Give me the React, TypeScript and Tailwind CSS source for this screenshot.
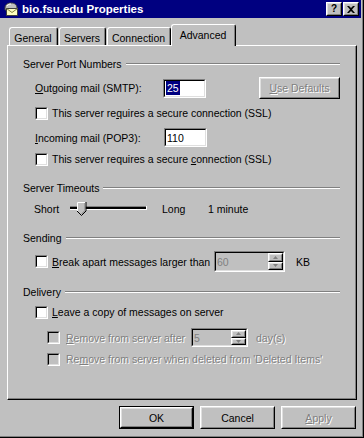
import type { ReactNode } from "react";

const sunken = "border border-t-[#808080] border-l-[#808080] border-r-white border-b-white";
const sunkenInner = "border border-t-black border-l-black border-r-[#dfdfdf] border-b-[#dfdfdf]";
const raised = "border border-t-white border-l-white border-r-black border-b-black";
const raisedInner = "border border-t-[#dfdfdf] border-l-[#dfdfdf] border-r-[#808080] border-b-[#808080]";
const grayed = "text-[#808080] [text-shadow:1px_1px_0_#fff]";

export default function App() {
  return (
    <div className="h-[438px] w-[364px] overflow-hidden border-r border-b border-r-black border-b-black bg-[#c0c0c0] font-['Liberation_Sans',Arial,sans-serif] text-[10.5px] leading-[14px] text-black">
      <div className="flex h-full flex-col border-r border-b border-r-[#808080] border-b-[#808080]">
        <TitleBar />
        <Tabs />
        <section className="ml-[7px] flex h-[355px] w-[350px] flex-col border border-t-white border-l-white border-r-black border-b-black">
          <div className="flex h-full flex-col border-r border-b border-r-[#808080] border-b-[#808080] pt-[11px] pr-[15px] pl-[15px]">
            <GroupHeader label="Server Port Numbers" />

            <div className="mt-[6px] flex h-[22px] items-center pl-[12px]">
              <span className="w-[129px]">
                <u>O</u>utgoing mail (SMTP):
              </span>
              <Field width="w-[43px]">
                <span className="bg-[#000080] px-[1px] text-white">25</span>
              </Field>
              <Button className="ml-[53px] w-[81px]" disabled>
                <u>U</u>se Defaults
              </Button>
            </div>

            <CheckRow className="mt-[7px]">
              This server re<u>q</u>uires a secure connection (SSL)
            </CheckRow>

            <div className="mt-[8px] flex h-[19px] items-center pl-[12px]">
              <span className="w-[129px]">
                <u>I</u>ncoming mail (POP3):
              </span>
              <Field width="w-[43px]">110</Field>
            </div>

            <CheckRow className="mt-[5px]">
              This server requires a secure <u>c</u>onnection (SSL)
            </CheckRow>

            <div className="mt-[15px]">
              <GroupHeader label="Server Timeouts" />
            </div>

            <div className="mt-[6px] flex h-[16px] items-center pl-[11px]">
              <span className="w-[36px]">Short</span>
              <Slider />
              <span className="ml-[14px] w-[46px]">Long</span>
              <span>1 minute</span>
            </div>

            <div className="mt-[14px]">
              <GroupHeader label="Sending" />
            </div>

            <div className="mt-[6px] flex h-[21px] items-center pl-[12px]">
              <Check />
              <span className="ml-[4px] w-[162px] whitespace-nowrap">
                <u>B</u>reak apart messages larger than
              </span>
              <SpinBox value="60" width="w-[71px]" />
              <span className="ml-[11px]">KB</span>
            </div>

            <div className="mt-[13px]">
              <GroupHeader label="Delivery" />
            </div>

            <CheckRow className="mt-[6px]">
              <u>L</u>eave a copy of messages on server
            </CheckRow>

            <div className="mt-[9px] flex h-[19px] items-center pl-[24px]">
              <Check disabled />
              <span className={`ml-[6px] w-[125px] whitespace-nowrap ${grayed}`}>
                <u>R</u>emove from server after
              </span>
              <SpinBox value="5" width="w-[57px]" />
              <span className={`ml-[8px] ${grayed}`}>day(s)</span>
            </div>

            <div className="mt-[5px] flex h-[14px] items-center pl-[24px]">
              <Check disabled />
              <span className={`ml-[6px] whitespace-nowrap ${grayed}`}>
                Re<u>m</u>ove from server when deleted from 'Deleted Items'
              </span>
            </div>
          </div>
        </section>

        <footer className="mt-[6px] flex gap-[6px] pl-[119px]">
          <div className="h-[23px] w-[75px] border border-black">
            <div className={`h-full w-full ${raised}`}>
              <div className={`flex h-full w-full items-center justify-center ${raisedInner}`}>OK</div>
            </div>
          </div>
          <Button className="h-[23px] w-[75px]">Cancel</Button>
          <Button className="h-[23px] w-[75px]" disabled>
            <u>A</u>pply
          </Button>
        </footer>
      </div>
    </div>
  );
}

function TitleBar() {
  return (
    <header className="mr-[1px] flex h-[18px] shrink-0 items-center bg-[#000080] pr-[2px] pl-[3px]">
      <MailIcon />
      <span className="ml-[3px] text-[11.5px] font-bold text-white">bio.fsu.edu Properties</span>
      <div className="ml-auto flex">
        <div className={`h-[14px] w-[16px] bg-[#c0c0c0] ${raised}`}>
          <div className={`flex h-full w-full items-center justify-center text-[10px] leading-[10px] font-bold ${raisedInner}`}>
            ?
          </div>
        </div>
        <div className={`ml-[1px] h-[14px] w-[16px] bg-[#c0c0c0] ${raised}`}>
          <div className={`flex h-full w-full items-center justify-center ${raisedInner}`}>
            <svg width="8" height="7" viewBox="0 0 8 7" aria-hidden>
              <path d="M0 0h2l2 2 2-2h2L5 3.5 8 7H6L4 5 2 7H0l3-3.5z" fill="#000" />
            </svg>
          </div>
        </div>
      </div>
    </header>
  );
}

function MailIcon() {
  return (
    <svg width="16" height="16" viewBox="0 0 16 16" aria-hidden>
      <path d="M2 7c0-3 2-5 6-5s6 2 6 5v2H2z" fill="#c0c0c0" stroke="#404040" strokeWidth="1" />
      <path d="M4 5c1-1.5 2.5-2 4-2" stroke="#fff" strokeWidth="1" fill="none" />
      <rect x="3.5" y="7.5" width="11" height="7" fill="#ffffc0" stroke="#404040" />
      <path d="M3.5 7.5l5.5 4 5.5-4" stroke="#808040" fill="none" />
    </svg>
  );
}

function Tabs() {
  return (
    <nav className="mt-[6px] flex h-[21px] items-end pl-[9px]">
      <Tab className="w-[49px]">General</Tab>
      <Tab className="ml-[1px] w-[47px]">Servers</Tab>
      <Tab className="ml-[1px] w-[64px]">Connection</Tab>
      <div className="relative z-10 -mb-px h-[22px] w-[65px] rounded-t-[3px] border-t border-l border-r border-t-white border-l-white border-r-black bg-[#c0c0c0]">
        <div className="flex h-full justify-center border-r border-r-[#808080] pt-[3px]">Advanced</div>
      </div>
    </nav>
  );
}

function Tab({ className, children }: { className: string; children: ReactNode }) {
  return (
    <div className={`h-[18px] rounded-t-[3px] border-t border-l border-r border-t-white border-l-white border-r-black ${className}`}>
      <div className="flex h-full justify-center border-r border-r-[#808080] pt-[3px]">{children}</div>
    </div>
  );
}

function GroupHeader({ label }: { label: string }) {
  return (
    <div className="flex h-[14px] items-center">
      <span className="whitespace-nowrap">{label}</span>
      <div className="ml-[4px] h-[2px] flex-1 border-y border-t-[#808080] border-b-white" />
    </div>
  );
}

function Check({ disabled }: { disabled?: boolean }) {
  return (
    <div className={`h-[13px] w-[13px] shrink-0 ${sunken}`}>
      <div className={`h-full w-full ${sunkenInner} ${disabled ? "bg-[#c0c0c0]" : "bg-white"}`} />
    </div>
  );
}

function CheckRow({ className, children }: { className: string; children: ReactNode }) {
  return (
    <div className={`flex h-[14px] items-center pl-[12px] ${className}`}>
      <Check />
      <span className="ml-[4px] whitespace-nowrap">{children}</span>
    </div>
  );
}

function Field({ width, children }: { width: string; children: ReactNode }) {
  return (
    <div className={`h-[19px] shrink-0 ${width} ${sunken}`}>
      <div className={`flex h-full w-full items-center bg-white pl-[1px] ${sunkenInner}`}>{children}</div>
    </div>
  );
}

function Button({ className, disabled, children }: { className: string; disabled?: boolean; children: ReactNode }) {
  return (
    <div className={`h-[22px] shrink-0 ${raised} ${className}`}>
      <div className={`flex h-full w-full items-center justify-center ${raisedInner} ${disabled ? grayed : ""}`}>
        {children}
      </div>
    </div>
  );
}

function SpinBox({ value, width }: { value: string; width: string }) {
  return (
    <div className={`h-full shrink-0 ${width} ${sunken}`}>
      <div className={`flex h-full w-full ${sunkenInner}`}>
        <span className="flex flex-1 items-center pl-[1px] text-[#808080]">{value}</span>
        <div className="flex w-[15px] flex-col">
          <SpinButton up />
          <SpinButton />
        </div>
      </div>
    </div>
  );
}

function SpinButton({ up }: { up?: boolean }) {
  return (
    <div className={`flex-1 ${raised}`}>
      <div className={`flex h-full w-full items-center justify-center ${raisedInner}`}>
        <svg width="5" height="3" viewBox="0 0 5 3" aria-hidden>
          <path d={up ? "M2.5 0L5 3H0z" : "M0 0h5L2.5 3z"} fill="#808080" />
        </svg>
      </div>
    </div>
  );
}

function Slider() {
  return (
    <svg width="78" height="16" viewBox="0 0 78 16" aria-hidden>
      <rect x="0" y="5" width="77" height="1" fill="#808080" />
      <rect x="0" y="6" width="77" height="2" fill="#000" />
      <rect x="0" y="8" width="77" height="1" fill="#fff" />
      <rect x="76" y="5" width="1" height="4" fill="#fff" />
      <path d="M7.5 1.5h8v8l-4 4-4-4z" fill="#c0c0c0" />
      <path d="M7.5 10V1.5h8" stroke="#fff" fill="none" />
      <path d="M16 1v9l-4.5 4.5L7 10" stroke="#000" fill="none" />
      <path d="M15 2v7.5l-3.5 3.5" stroke="#808080" fill="none" />
    </svg>
  );
}
